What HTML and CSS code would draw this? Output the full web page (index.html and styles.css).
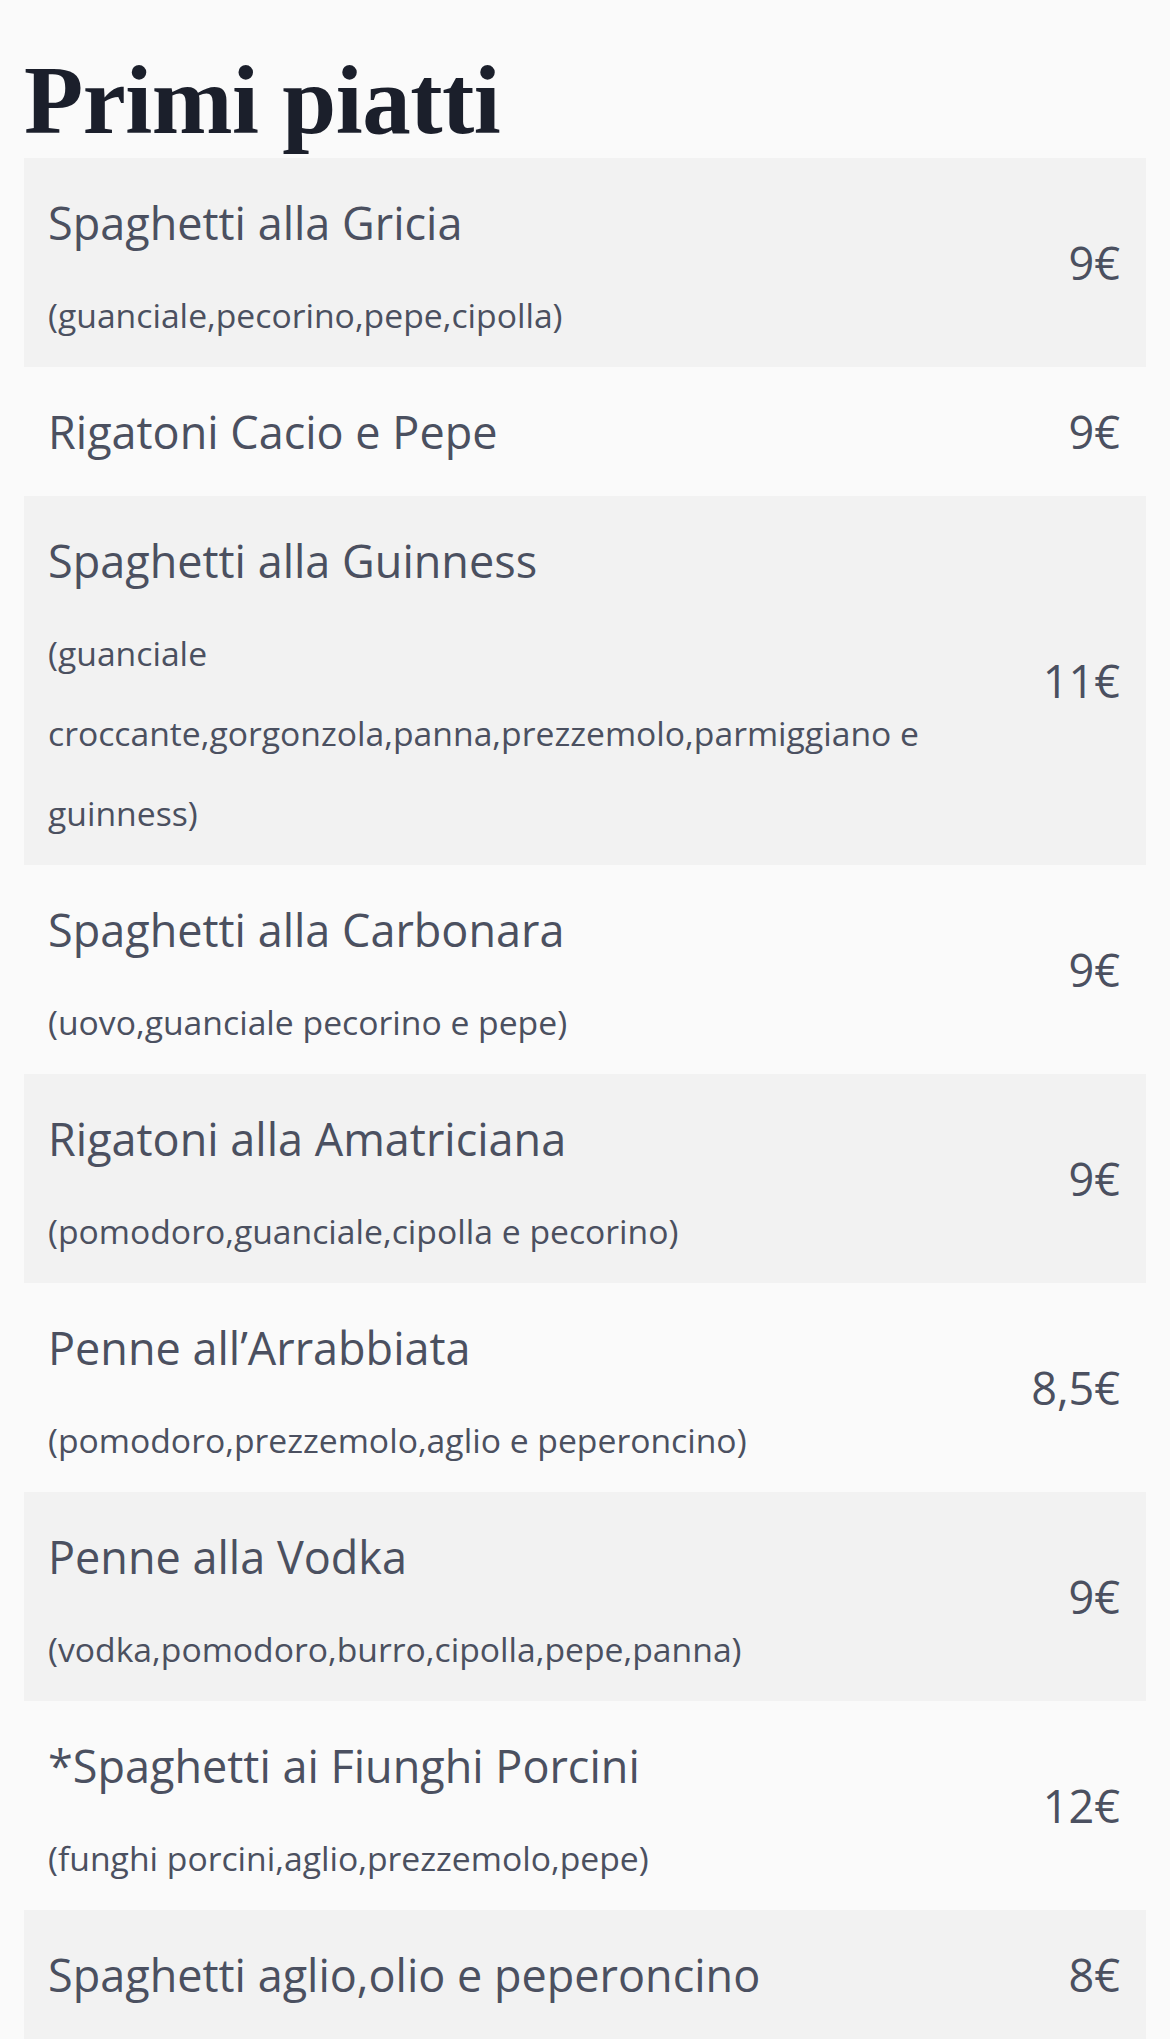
FILE: index.html
```html
<!DOCTYPE html>
<html lang="it">
<head>
  <meta charset="UTF-8">
  <meta name="viewport" content="width=device-width, initial-scale=1.0">
  <title>Primi piatti</title>
  <link rel="stylesheet" href="styles.css">
</head>
<body>
  <div class="menu">
    <h1>Primi piatti</h1>

    <div class="dish">
      <div class="info">
        <p class="name">Spaghetti alla Gricia</p>
        <p class="desc">(guanciale,pecorino,pepe,cipolla)</p>
      </div>
      <span class="price">9€</span>
    </div>

    <div class="dish">
      <div class="info">
        <p class="name">Rigatoni Cacio e Pepe</p>
      </div>
      <span class="price">9€</span>
    </div>

    <div class="dish">
      <div class="info">
        <p class="name">Spaghetti alla Guinness</p>
        <p class="desc">(guanciale croccante,gorgonzola,panna,prezzemolo,parmiggiano e guinness)</p>
      </div>
      <span class="price">11€</span>
    </div>

    <div class="dish">
      <div class="info">
        <p class="name">Spaghetti alla Carbonara</p>
        <p class="desc">(uovo,guanciale pecorino e pepe)</p>
      </div>
      <span class="price">9€</span>
    </div>

    <div class="dish">
      <div class="info">
        <p class="name">Rigatoni alla Amatriciana</p>
        <p class="desc">(pomodoro,guanciale,cipolla e pecorino)</p>
      </div>
      <span class="price">9€</span>
    </div>

    <div class="dish">
      <div class="info">
        <p class="name">Penne all’Arrabbiata</p>
        <p class="desc">(pomodoro,prezzemolo,aglio e peperoncino)</p>
      </div>
      <span class="price">8,5€</span>
    </div>

    <div class="dish">
      <div class="info">
        <p class="name">Penne alla Vodka</p>
        <p class="desc">(vodka,pomodoro,burro,cipolla,pepe,panna)</p>
      </div>
      <span class="price">9€</span>
    </div>

    <div class="dish">
      <div class="info">
        <p class="name">*Spaghetti ai Fiunghi Porcini</p>
        <p class="desc">(funghi porcini,aglio,prezzemolo,pepe)</p>
      </div>
      <span class="price">12€</span>
    </div>

    <div class="dish">
      <div class="info">
        <p class="name">Spaghetti aglio,olio e peperoncino</p>
      </div>
      <span class="price">8€</span>
    </div>
  </div>
</body>
</html>
```

FILE: styles.css
```css
body {
  margin: 0;
  background: #fafafa;
  font-family: 'Open Sans', sans-serif;
  color: #4b5060;
}

.menu {
  padding: 52px 24px 40px;
}

h1 {
  margin: 0 0 9px;
  font-family: 'Liberation Serif', serif;
  font-weight: 700;
  font-size: 97px;
  line-height: 1;
  color: #1b1f2b;
  letter-spacing: -0.5px;
}

.dish {
  display: flex;
  align-items: center;
  gap: 24px;
  padding: 12px 26px 12px 24px;
}

.dish:nth-of-type(odd) {
  background: #f2f2f2;
}

.info {
  flex: 1;
}

.name {
  margin: 0;
  font-size: 45px;
  line-height: 105px;
}

.desc {
  margin: 0;
  font-size: 33.7px;
  line-height: 80px;
}

.price {
  font-size: 45px;
  white-space: nowrap;
}
```
